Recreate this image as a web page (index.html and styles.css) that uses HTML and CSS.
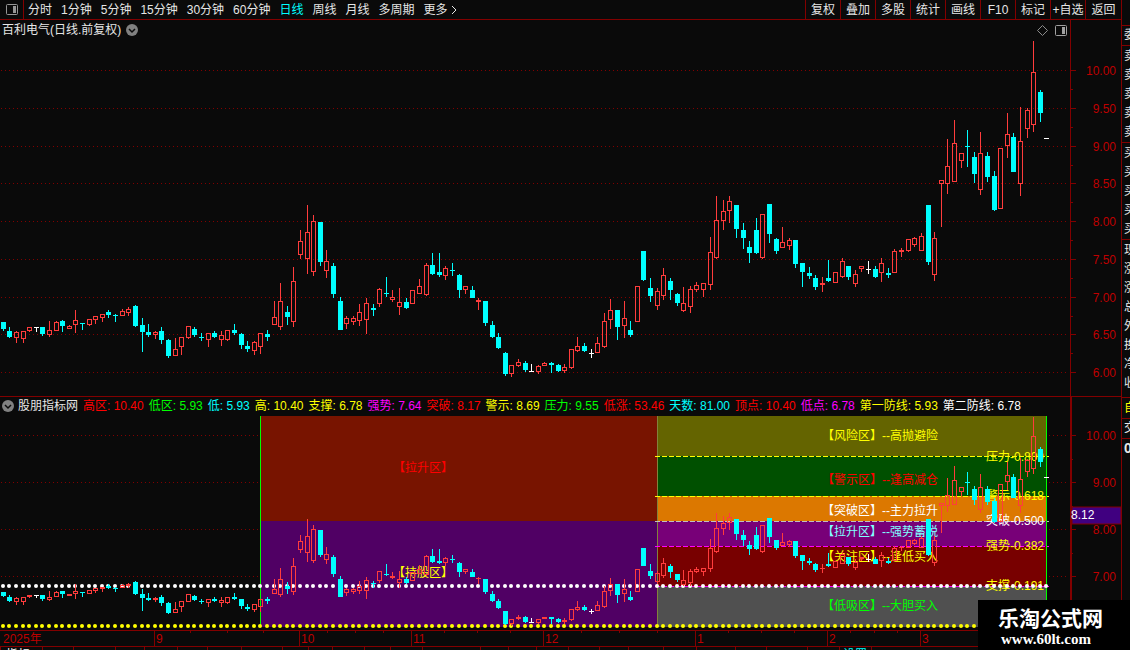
FILE: index.html
```html
<!DOCTYPE html>
<html lang="zh-CN">
<head>
<meta charset="UTF-8">
<title>百利电气</title>
<link rel="stylesheet" href="styles.css">
</head>
<body>

<div class="main">
    <header class="toolbar">
        <button class="panel-toggle" aria-label="侧栏">
            <svg width="12" height="11" viewBox="0 0 12 11"><rect x="0.500" y="0.500" width="11" height="10" rx="1" fill="none" stroke="#969696"/><rect x="7" y="2" width="3" height="7" fill="#969696"/></svg>
        </button>
        <nav class="periods">
            <button>分时</button>
            <button>1分钟</button>
            <button>5分钟</button>
            <button>15分钟</button>
            <button>30分钟</button>
            <button>60分钟</button>
            <button class="active">日线</button>
            <button>周线</button>
            <button>月线</button>
            <button>多周期</button>
            <button class="more">更多<svg width="6" height="10" viewBox="0 0 6 10"><path d="M1 1l4 4l-4 4" fill="none" stroke="#e6e6e6"/></svg></button>
        </nav>
        <nav class="tools">
            <button>复权</button>
            <button>叠加</button>
            <button>多股</button>
            <button>统计</button>
            <button>画线</button>
            <button>F10</button>
            <button>标记</button>
            <button>+自选</button>
            <button>返回</button>
        </nav>
    </header>

    <section class="pane">
        <div class="pane-head">
            <span>百利电气(日线.前复权)</span>
            <button aria-label="展开"><svg width="12" height="12" viewBox="0 0 12 12"><circle cx="6" cy="6" r="6" fill="#808080"/><path d="M3 5l3 3l3-3" fill="none" stroke="#0a0a0a" stroke-width="1.5"/></svg></button>
            <div class="pane-icons">
                <button aria-label="标记"><svg width="11" height="11" viewBox="0 0 11 11"><path d="M5.500 0.500l5 5l-5 5l-5-5z" fill="none" stroke="#8c8c8c"/></svg></button>
                <button aria-label="窗口"><svg width="12" height="11" viewBox="0 0 12 11"><rect x="0.500" y="0.500" width="11" height="10" rx="1" fill="none" stroke="#a0a0a0"/><rect x="7" y="2" width="3" height="7" fill="#a0a0a0"/></svg></button>
            </div>
        </div>
        <svg id="priceChart" class="chart" viewBox="0 20 1121 376"></svg>
    </section>

    <section class="pane pane-lower">
        <div class="legend">
            <button aria-label="展开"><svg width="12" height="12" viewBox="0 0 12 12"><circle cx="6" cy="6" r="6" fill="#808080"/><path d="M3 5l3 3l3-3" fill="none" stroke="#0a0a0a" stroke-width="1.5"/></svg></button>
            <span class="name">股朋指标网</span>
            <span class="red">高区: 10.40</span>
            <span class="green">低区: 5.93</span>
            <span class="cyan">低: 5.93</span>
            <span class="yellow">高: 10.40</span>
            <span class="yellow">支撑: 6.78</span>
            <span class="magenta">强势: 7.64</span>
            <span class="red">突破: 8.17</span>
            <span class="yellow">警示: 8.69</span>
            <span class="green">压力: 9.55</span>
            <span class="red">低涨: 53.46</span>
            <span class="cyan">天数: 81.00</span>
            <span class="red">顶点: 10.40</span>
            <span class="magenta">低点: 6.78</span>
            <span class="yellow">第一防线: 5.93</span>
            <span class="white">第二防线: 6.78</span>
        </div>
        <svg id="zoneChart" class="chart" viewBox="0 397 1121 253"></svg>
    </section>
</div>

<aside class="quote">
    <div class="group"><span>委</span></div>
    <div class="group five"><span>卖</span><span>卖</span><span>卖</span><span>卖</span><span>卖</span></div>
    <div class="group five"><span>买</span><span>买</span><span>买</span><span>买</span><span>买</span></div>
    <div class="group stats"><span>现</span><span>涨</span><span>涨</span><span>总</span><span>外</span><span>换</span><span>净</span><span>收</span></div>
    <div class="group"><span class="yellow">自</span></div>
    <div class="group"><span>交</span></div>
    <div class="group"><span class="bold">0</span></div>
</aside>

<div class="watermark">
    <strong>乐淘公式网</strong>
    <span>www.60lt.com</span>
</div>

<script src="chart.js"></script>
</body>
</html>
```
FILE: styles.css
```css
* {
    box-sizing: border-box;
}

body {
    margin: 0;
    display: flex;
    min-height: 100vh;
    overflow: hidden;
    background-color: #0a0a0a;
    color: #e6e6e6;
    font-family: "Liberation Sans", "Noto Sans CJK SC", sans-serif;
    font-size: 12px;
    line-height: 18px;
}

button {
    display: flex;
    align-items: center;
    justify-content: center;
    padding: 0;
    border: 0;
    background: none;
    color: inherit;
    font: inherit;
    white-space: nowrap;
    cursor: pointer;
}

.main {
    flex: 1;
    min-width: 0;
}

/* Toolbar */
.toolbar {
    display: flex;
    height: 20px;
    border-bottom: 1px solid #820000;
}

.panel-toggle {
    width: 24px;
    border-right: 1px solid #820000;
}

.periods {
    display: flex;
    flex: 1;
    gap: 9px;
    padding-left: 4px;
}

.periods .active {
    color: #00ffff;
}

.periods .more {
    gap: 3px;
}

.tools {
    display: flex;
}

.tools button {
    width: 35px;
    border-left: 1px solid #820000;
}

.tools button:last-child {
    width: 36px;
}

/* Chart panes */
.pane {
    position: relative;
}

.pane-lower {
    border-top: 1px solid #820000;
}

.chart {
    display: block;
    width: 100%;
}

.pane-head {
    position: absolute;
    top: 0;
    left: 0;
    right: 0;
    display: flex;
    align-items: center;
    gap: 5px;
    padding-left: 2px;
    padding-right: 54px;
    line-height: 20px;
}

.pane-icons {
    display: flex;
    gap: 7px;
    margin-left: auto;
}

.legend {
    position: absolute;
    top: 0;
    left: 0;
    right: 0;
    display: flex;
    align-items: center;
    gap: 5px;
    padding-left: 2px;
    line-height: 18px;
    white-space: nowrap;
}

.legend button {
    margin-right: -1px;
}

.red { color: #ff0000; }
.green { color: #00ff00; }
.cyan { color: #00ffff; }
.yellow { color: #ffff00; }
.magenta { color: #ff00ff; }
.white { color: #ffffff; }

/* SVG parts */
.grid {
    stroke: #820000;
    stroke-dasharray: 1 3;
}

.axis {
    stroke: #820000;
}

.axis-text {
    fill: #be0000;
}

.up {
    fill: none;
    stroke: #ff3c3c;
}

.up-fill {
    fill: #ff3c3c;
}

.down-fill {
    fill: #00ffff;
}

.flat-fill {
    fill: #ffffff;
}

.level {
    stroke-dasharray: 5 2;
}

/* Quote column */
.quote {
    flex: none;
    width: 9px;
    padding-top: 25px;
    overflow: hidden;
    border-left: 1px solid #820000;
}

.group {
    display: flex;
    flex-direction: column;
    padding-left: 2px;
    border-top: 1px solid #820000;
    line-height: 19px;
}

.five {
    padding-top: 1px;
}

.stats {
    padding-top: 1px;
    padding-bottom: 4px;
}

.stats + .group {
    padding-top: 1px;
}

.bold {
    font-size: 14px;
    font-weight: bold;
}

/* Watermark */
.watermark {
    position: fixed;
    right: 0;
    bottom: 0;
    display: flex;
    flex-direction: column;
    width: 152px;
    height: 50px;
    padding: 7px 20px 0;
    background-color: #000000;
    color: #ffffff;
    white-space: nowrap;
}

.watermark strong {
    font-size: 21px;
    line-height: 24px;
}

.watermark span {
    padding-left: 3px;
    font-family: "Liberation Serif", serif;
    font-size: 15px;
    font-weight: bold;
    line-height: 16px;
}
```
FILE: chart.js
```js
// one bar each: high, body top, body bottom, low, kind (u = up, d = down, w = flat)
var bars = [
    [322,322,329,331,'d'],[327,331,337,338,'d'],[331,332,338,343,'u'],[331,331,339,343,'u'],[327,327,331,332,'u'],
    [327,327,328,332,'w'],[327,327,334,336,'d'],[321,330,335,337,'u'],[321,322,331,331,'u'],[320,321,326,332,'d'],
    [325,326,329,329,'u'],[310,320,325,333,'u'],[323,323,324,330,'d'],[319,319,325,326,'u'],[316,316,320,324,'u'],
    [314,314,318,322,'u'],[310,312,315,318,'d'],[314,315,316,322,'d'],[309,311,316,316,'u'],[307,309,313,316,'u'],
    [305,306,326,327,'d'],[318,325,332,352,'d'],[324,332,335,337,'d'],[331,332,335,339,'u'],[327,331,340,344,'d'],
    [339,340,356,358,'d'],[338,349,356,356,'u'],[337,337,347,355,'u'],[326,326,338,339,'u'],[327,329,335,337,'d'],
    [333,337,338,341,'d'],[333,333,340,347,'u'],[331,333,337,338,'d'],[331,335,340,346,'u'],[330,330,340,341,'u'],
    [324,330,333,335,'d'],[333,334,345,349,'d'],[341,346,349,352,'d'],[341,342,351,355,'u'],[333,333,347,354,'u'],
    [330,334,337,341,'d'],[301,317,325,325,'u'],[283,301,327,330,'u'],[306,312,317,325,'d'],[267,281,322,327,'u'],
    [230,241,255,259,'u'],[205,232,259,274,'u'],[215,221,272,276,'u'],[222,222,262,266,'d'],[250,261,271,278,'u'],
    [263,266,294,298,'d'],[297,301,330,330,'d'],[316,318,324,329,'u'],[316,318,322,325,'u'],[304,312,321,326,'u'],
    [298,303,320,334,'u'],[304,308,310,316,'d'],[288,289,304,307,'u'],[277,293,294,297,'d'],[290,297,300,302,'u'],
    [288,302,307,315,'u'],[298,302,308,309,'d'],[290,290,304,304,'u'],[279,286,294,294,'u'],[263,265,295,296,'u'],
    [253,265,274,275,'d'],[253,272,275,277,'d'],[266,268,276,280,'u'],[263,270,271,276,'d'],[274,275,290,298,'d'],
    [286,286,290,294,'u'],[286,290,298,298,'d'],[298,300,302,310,'u'],[301,301,323,326,'d'],[321,325,337,338,'d'],
    [333,337,348,349,'d'],[352,353,374,376,'d'],[365,365,374,377,'u'],[359,362,366,367,'u'],[361,363,370,372,'d'],
    [364,371,372,372,'w'],[365,366,372,374,'u'],[362,363,366,366,'u'],[362,363,365,373,'d'],[364,365,371,372,'d'],
    [364,367,371,373,'u'],[349,349,368,369,'u'],[337,346,351,352,'u'],[343,346,351,352,'d'],[349,353,354,358,'w'],
    [337,343,353,353,'u'],[313,321,347,348,'u'],[299,310,320,329,'u'],[310,310,327,340,'d'],[301,318,326,338,'u'],
    [321,330,335,337,'d'],[286,286,322,322,'u'],[251,251,280,281,'d'],[278,288,296,302,'d'],[288,291,306,310,'u'],
    [268,275,296,300,'u'],[278,281,290,300,'d'],[293,294,303,306,'d'],[287,303,311,312,'u'],[286,289,307,313,'u'],
    [282,285,290,292,'u'],[283,283,290,297,'u'],[237,252,285,290,'u'],[196,220,258,259,'u'],[200,211,221,230,'u'],
    [196,201,211,223,'u'],[205,205,229,238,'d'],[223,230,238,249,'d'],[241,247,253,263,'d'],[218,230,253,254,'d'],
    [214,214,258,259,'u'],[204,204,234,243,'d'],[238,239,251,254,'d'],[227,242,248,248,'u'],[238,240,246,250,'u'],
    [240,240,264,268,'d'],[263,263,272,287,'d'],[267,273,276,279,'d'],[275,278,287,290,'d'],[277,283,285,292,'u'],
    [260,278,281,282,'d'],[272,272,283,283,'u'],[258,261,277,278,'u'],[266,266,277,280,'d'],[270,274,284,287,'u'],
    [266,266,269,272,'u'],[261,269,270,274,'w'],[266,269,277,278,'d'],[258,263,273,282,'u'],[268,273,275,278,'d'],
    [249,251,273,273,'u'],[248,250,252,257,'u'],[239,239,251,252,'u'],[237,238,245,247,'u'],[233,236,251,251,'u'],
    [205,205,262,265,'d'],[232,238,275,281,'u'],[180,180,184,227,'u'],[139,166,184,194,'u'],[120,143,182,182,'u'],
    [153,153,161,168,'u'],[130,146,147,167,'d'],[152,157,174,183,'d'],[132,153,190,195,'u'],[152,156,177,182,'d'],
    [171,176,210,211,'d'],[148,148,209,209,'u'],[113,134,146,158,'u'],[133,137,172,172,'d'],[107,141,184,196,'u'],
    [108,110,129,138,'u'],[41,72,125,132,'u'],[90,92,113,122,'d'],[138,138,139,139,'w']
];

function barX(i) {
    return Math.floor(3.3 + i * 6.605);
}

function rect(x, y, w, h, attrs) {
    return '<rect x="' + x + '" y="' + y + '" width="' + w + '" height="' + h + '" ' + attrs + '/>';
}

function line(x1, y1, x2, y2, attrs) {
    return '<line x1="' + x1 + '" y1="' + y1 + '" x2="' + x2 + '" y2="' + y2 + '" ' + attrs + '/>';
}

function text(x, y, str, attrs) {
    return '<text x="' + x + '" y="' + y + '" ' + attrs + '>' + str + '</text>';
}

function candles(scale) {
    var out = '';
    bars.forEach(function (b, i) {
        var x = barX(i);
        var high = scale(b[0]), top = scale(b[1]), bottom = scale(b[2]), low = scale(b[3]);
        if (bottom <= top) bottom = top + 1;
        var cls = { u: 'up-fill', d: 'down-fill', w: 'flat-fill' }[b[4]];
        if (high < top) out += rect(x, high, 1, top - high, 'class="' + cls + '"');
        if (low > bottom) out += rect(x, bottom, 1, low - bottom, 'class="' + cls + '"');
        if (b[4] === 'u' && bottom - top > 2) {
            out += rect(x - 1.5, top + 0.5, 4, bottom - top - 1, 'class="up"');
        } else {
            out += rect(x - 2, top, 5, bottom - top, 'class="' + cls + '"');
        }
    });
    return '<g shape-rendering="crispEdges">' + out + '</g>';
}

function drawPrice() {
    var out = '';
    var rows = [70, 108, 146, 183, 221, 259, 297, 334, 372];
    rows.forEach(function (y, i) {
        out += line(1, y + 0.5, 1067, y + 0.5, 'class="grid"');
        out += line(1071, y + 0.5, 1076, y + 0.5, 'class="axis"');
        if (i < 8) out += line(1071, y + 19.5, 1073, y + 19.5, 'class="axis"');
        out += text(1116, y + 5, (10 - i * 0.5).toFixed(2), 'class="axis-text" text-anchor="end"');
    });
    out += line(1070.5, 20, 1070.5, 396, 'class="axis"');
    out += candles(function (y) { return y; });
    document.getElementById('priceChart').innerHTML = out;
}

function drawZones() {
    var out = '';

    [435, 482, 529, 576].forEach(function (y, i) {
        out += line(1, y + 0.5, 260, y + 0.5, 'class="grid"');
        out += line(1049, y + 0.5, 1067, y + 0.5, 'class="grid"');
        out += line(1071, y + 0.5, 1076, y + 0.5, 'class="axis"');
        out += line(1071, y + 24.5, 1073, y + 24.5, 'class="axis"');
        out += text(1116, y + 5, (10 - i).toFixed(2), 'class="axis-text" text-anchor="end"');
    });

    // coloured zones
    out += rect(261, 416, 396, 105, 'fill="#781400"');
    out += rect(261, 521, 396, 106, 'fill="#500064"');
    out += rect(657, 416, 389, 40, 'fill="#646400"');
    out += rect(657, 456, 389, 40, 'fill="#005000"');
    out += rect(657, 496, 389, 25, 'fill="#dc7800"');
    out += rect(657, 521, 389, 25, 'fill="#780078"');
    out += rect(657, 546, 389, 40, 'fill="#780000"');
    out += rect(657, 586, 389, 41, 'fill="#505050"');
    out += rect(657, 416, 1, 211, 'fill="#82823c"');
    out += rect(260, 416, 1, 211, 'fill="#00ff00"');
    out += rect(1046, 416, 1, 211, 'fill="#00ff00"');

    [[456, '#ffff00'], [496, '#ffff00'], [521, '#c0c0c0'], [546, '#ff00ff'], [586, '#ff00ff']].forEach(function (l) {
        out += line(655, l[0] + 0.5, 1049, l[0] + 0.5, 'class="level" stroke="' + l[1] + '"');
    });

    out += text(393, 472, '【拉升区】', 'fill="#ff0000"');
    out += text(393, 577, '【持股区】', 'fill="#ffff00"');
    out += text(822, 440, '【风险区】--高抛避险', 'fill="#ffff00"');
    out += text(822, 484, '【警示区】--逢高减仓', 'fill="#ff0000"');
    out += text(822, 515, '【突破区】--主力拉升', 'fill="#ffffff"');
    out += text(822, 536, '【拉升区】--强势蓄脱', 'fill="#80ffff"');
    out += text(822, 561, '【关注区】--逢低买入', 'fill="#ffff00"');
    out += text(822, 610, '【低吸区】--大胆买入', 'fill="#00ff00"');

    out += text(986, 461, '压力-0.809', 'fill="#ffff00"');
    out += text(986, 500, '警示-0.618', 'fill="#ffff00"');
    out += text(986, 525, '突破-0.500', 'fill="#ffffff"');
    out += text(986, 550, '强势-0.382', 'fill="#ffff00"');
    out += text(986, 590, '支撑-0.191', 'fill="#ffff00"');

    // defence lines
    bars.forEach(function (b, i) {
        out += '<circle cx="' + (barX(i)) + '" cy="586" r="2" fill="#ffffff"/>';
        out += '<circle cx="' + (barX(i)) + '" cy="626" r="2" fill="#ffff00"/>';
    });

    out += candles(function (y) { return Math.round(435.3 + (y - 70.5) * 47 / 75.5); });

    // price axis and date axis
    out += rect(1070, 397, 2, 233, 'fill="#820000"');
    out += rect(1072, 507, 49, 17, 'fill="#400080" stroke="#820000"');
    out += text(1071, 519, '8.12', 'fill="#ffffff"');
    out += line(0, 630.5, 1121, 630.5, 'class="axis"');
    out += line(0, 646.5, 1121, 646.5, 'class="axis"');
    out += text(3, 643, '2025年', 'class="axis-text"');
    [[154, '9'], [299, '10'], [411, '11'], [543, '12'], [695, '1'], [827, '2'], [920, '3']].forEach(function (m) {
        out += line(m[0] + 0.5, 631, m[0] + 0.5, 646, 'class="axis"');
        out += text(m[0] + 2, 643, m[1], 'class="axis-text"');
    });
    [190, 227, 263, 327, 355, 383, 444, 477, 510, 581, 619, 657, 728, 761, 794, 850, 874, 897].forEach(function (x) {
        out += line(x + 0.5, 631, x + 0.5, 633, 'class="axis"');
    });
    [0, 42, 73, 115, 144, 177, 207, 241, 282, 308, 332, 364, 390, 422, 480, 508, 536, 568, 599, 628, 663, 696, 735, 766, 807, 839, 871].forEach(function (x) {
        out += line(x + 0.5, 647, x + 0.5, 650, 'class="axis"');
    });
    out += text(6, 659, '指标', 'fill="#ffffff"');
    out += text(843, 659, '设置', 'fill="#00ffff"');
    document.getElementById('zoneChart').innerHTML = out;
}

drawPrice();
drawZones();
```
